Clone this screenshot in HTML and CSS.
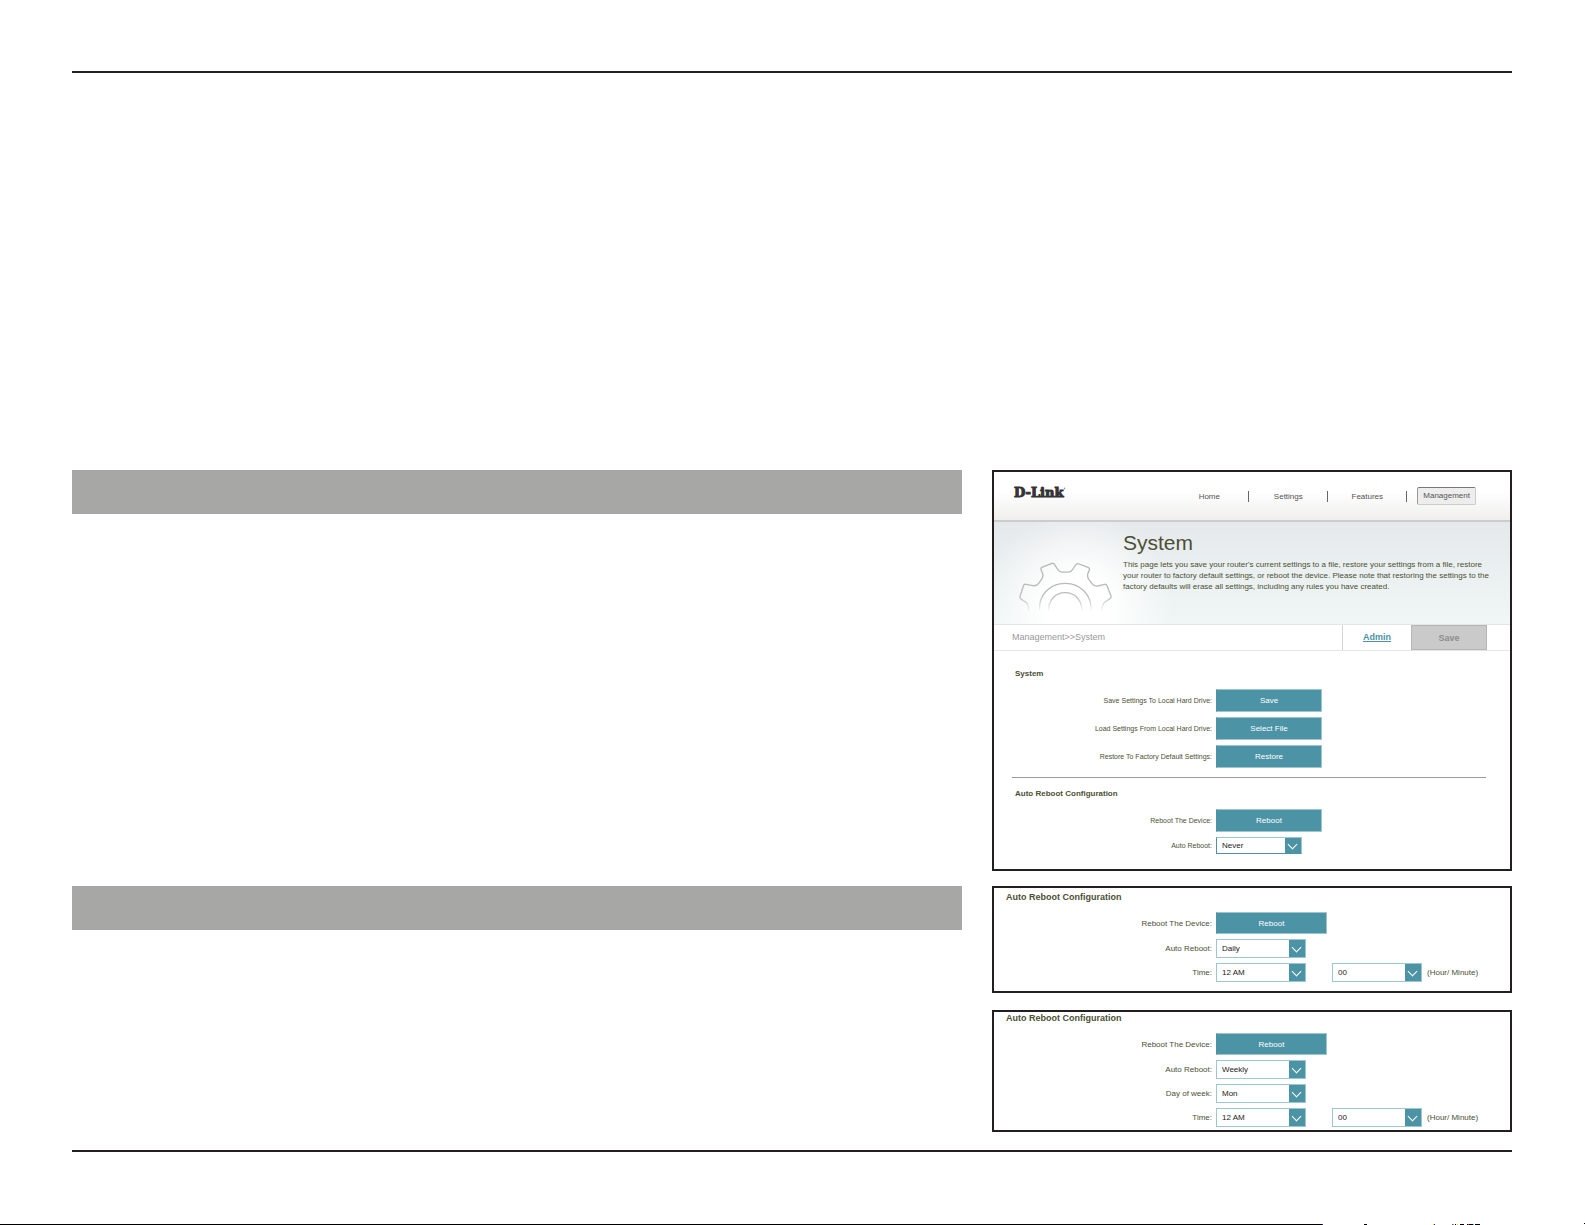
FILE: index.html
```html
<!DOCTYPE html>
<html lang="en">
<head>
    <meta charset="UTF-8">
    <meta name="viewport" content="width=device-width, initial-scale=1.0">
    <title>System</title>
    <link rel="stylesheet" href="styles.css">
</head>
<body>
    <main class="sheet">
        <div class="band"></div>

        <section class="panel">
            <header class="topbar">
                <a href="#" class="logo">D-Link<sup>&#39;</sup></a>
                <nav class="nav">
                    <a href="#">Home</a>
                    <a href="#">Settings</a>
                    <a href="#">Features</a>
                    <a href="#" class="active">Management</a>
                </nav>
            </header>

            <div class="banner">
                <svg class="gear" viewBox="0 0 280 150" fill="none" stroke="url(#fade)" stroke-width="4" aria-hidden="true">
                    <defs>
                        <linearGradient id="fade" gradientUnits="userSpaceOnUse" x1="0" y1="0" x2="0" y2="150">
                            <stop offset="0" stop-color="#b4b6b6"/>
                            <stop offset="0.7" stop-color="#bcbebe"/>
                            <stop offset="1" stop-color="#bcbebe" stop-opacity="0"/>
                        </linearGradient>
                    </defs>
                    <path d="M29 148 C29 136 28 127 22 122 L6 111 Q2 108 3 103 L14 70 Q16 66 21 67 L42 71 Q53 73 60 63 L69 50 Q74 43 71 34 L66 22 Q65 17 70 15 L99 4 Q104 3 107 7 L115 20 Q121 30 131 30 L149 30 Q158 29 163 20 L171 8 Q174 3 179 5 L208 16 Q213 18 212 23 L207 36 Q205 44 210 52 L219 64 Q226 74 237 72 L258 67 Q263 66 265 71 L277 102 Q278 107 274 110 L258 121 Q250 127 250 148"/>
                    <path d="M62 148 C58 100 92 64 139 64 C186 64 220 100 217 148"/>
                    <path d="M90 148 C87 116 109 92 139 92 C169 92 191 116 189 148"/>
                </svg>
                <div class="intro">
                    <h1>System</h1>
                    <p>This page lets you save your router's current settings to a file, restore your settings from a file, restore your router to factory default settings, or reboot the device. Please note that restoring the settings to the factory defaults will erase all settings, including any rules you have created.</p>
                </div>
            </div>

            <div class="crumbs">
                <span class="path">Management&gt;&gt;System</span>
                <a href="#" class="admin">Admin</a>
                <button type="button" class="save">Save</button>
            </div>

            <form class="settings">
                <h2>System</h2>
                <div class="row">
                    <label for="saveSettings">Save Settings To Local Hard Drive:</label>
                    <button type="button" id="saveSettings" class="btn">Save</button>
                </div>
                <div class="row">
                    <label for="loadSettings">Load Settings From Local Hard Drive:</label>
                    <button type="button" id="loadSettings" class="btn">Select File</button>
                </div>
                <div class="row">
                    <label for="restoreSettings">Restore To Factory Default Settings:</label>
                    <button type="button" id="restoreSettings" class="btn">Restore</button>
                </div>
                <hr>
                <h2>Auto Reboot Configuration</h2>
                <div class="row">
                    <label for="rebootNow">Reboot The Device:</label>
                    <button type="button" id="rebootNow" class="btn">Reboot</button>
                </div>
                <div class="row">
                    <label for="autoReboot">Auto Reboot:</label>
                    <span class="select">
                        <select id="autoReboot">
                            <option>Never</option>
                            <option>Daily</option>
                            <option>Weekly</option>
                        </select>
                    </span>
                </div>
            </form>
        </section>

        <div class="band"></div>

        <div class="schedules">
            <form class="panel settings schedule daily">
                <h2>Auto Reboot Configuration</h2>
                <div class="row">
                    <label for="rebootDaily">Reboot The Device:</label>
                    <button type="button" id="rebootDaily" class="btn">Reboot</button>
                </div>
                <div class="row">
                    <label for="autoDaily">Auto Reboot:</label>
                    <span class="select">
                        <select id="autoDaily">
                            <option>Never</option>
                            <option selected>Daily</option>
                            <option>Weekly</option>
                        </select>
                    </span>
                </div>
                <div class="row">
                    <label for="hourDaily">Time:</label>
                    <div class="time">
                        <span class="select">
                            <select id="hourDaily">
                                <option>12 AM</option>
                            </select>
                        </span>
                        <span class="select">
                            <select id="minuteDaily">
                                <option>00</option>
                            </select>
                        </span>
                        <label for="minuteDaily">(Hour/ Minute)</label>
                    </div>
                </div>
            </form>

            <form class="panel settings schedule">
                <h2>Auto Reboot Configuration</h2>
                <div class="row">
                    <label for="rebootWeekly">Reboot The Device:</label>
                    <button type="button" id="rebootWeekly" class="btn">Reboot</button>
                </div>
                <div class="row">
                    <label for="autoWeekly">Auto Reboot:</label>
                    <span class="select">
                        <select id="autoWeekly">
                            <option>Never</option>
                            <option>Daily</option>
                            <option selected>Weekly</option>
                        </select>
                    </span>
                </div>
                <div class="row">
                    <label for="dayWeekly">Day of week:</label>
                    <span class="select">
                        <select id="dayWeekly">
                            <option>Mon</option>
                        </select>
                    </span>
                </div>
                <div class="row">
                    <label for="hourWeekly">Time:</label>
                    <div class="time">
                        <span class="select">
                            <select id="hourWeekly">
                                <option>12 AM</option>
                            </select>
                        </span>
                        <span class="select">
                            <select id="minuteWeekly">
                                <option>00</option>
                            </select>
                        </span>
                        <label for="minuteWeekly">(Hour/ Minute)</label>
                    </div>
                </div>
            </form>
        </div>
    </main>

    <svg class="edge" viewBox="0 0 1585 2" preserveAspectRatio="none" shape-rendering="crispEdges" aria-hidden="true">
        <path d="M0 1h1322v1H0zM1364 1h3v1h-3zM1455 1h1v1h-1zM1460 1h4v1h-4zM1467 1h1v1h-1zM1469 1h4v1h-4zM1475 1h5v1h-5zM1584 0h1v1h-1z"/>
        <path fill="#2a20c0" d="M1322 1h1v1h-1zM1434 1h1v1h-1z"/>
        <path fill="#e8d820" d="M1433 1h1v1h-1zM1457 1h1v1h-1z"/>
        <path fill="#d03040" d="M1452 1h1v1h-1zM1468 1h1v1h-1z"/>
        <path fill="#30c8d0" d="M1453 1h1v1h-1zM1473 1h1v1h-1z"/>
    </svg>
</body>
</html>
```
FILE: styles.css
```css
* {
    box-sizing: border-box;
    margin: 0;
    padding: 0;
}
body {
    display: flex;
    flex-direction: column;
    min-height: 100vh;
    padding-top: 71px;
    background-color: #fff;
    font-family: "Liberation Sans", Arial, sans-serif;
    font-size: 8px;
    color: #4b4f35;
}
a {
    color: inherit;
    text-decoration: none;
}
button,
select {
    font-family: inherit;
    font-size: inherit;
    border-radius: 0;
}
.sheet {
    display: grid;
    grid-template-columns: 890fr 520fr;
    gap: 15px 30px;
    margin: 0 73px 0 72px;
    padding: 397px 0 18px;
    border-top: 2px solid #231f20;
    border-bottom: 2px solid #231f20;
}
.band {
    height: 44px;
    background-color: #a7a7a5;
}
.panel {
    border: 2px solid #231f20;
}
.topbar {
    display: flex;
    justify-content: space-between;
    align-items: center;
    height: 50px;
    padding: 0 34px 0 20px;
    background: linear-gradient(#fff 40%, #f0efee);
    border-bottom: 2px solid #ccc;
}
.logo {
    align-self: flex-start;
    padding-top: 13px;
    font-family: "DejaVu Serif", serif;
    font-size: 13px;
    line-height: 16px;
    font-weight: bold;
    color: #333;
    -webkit-text-stroke: 1px #333;
}
.logo sup {
    font-size: 6px;
    line-height: 1px;
    -webkit-text-stroke: 0;
}
.nav {
    display: flex;
    align-items: center;
    color: #555;
}
.nav a {
    width: 79px;
    line-height: 11px;
    text-align: center;
    border-right: 1px solid #666;
}
.nav a.active {
    width: auto;
    margin-left: 10px;
    padding: 0 5px;
    line-height: 16px;
    background-color: #ededed;
    border: 1px solid #ccc;
    border-top-color: #777;
    border-left-color: #999;
    border-radius: 2px;
}
.banner {
    display: flex;
    gap: 11px;
    height: 102px;
    padding: 9px 16px 0 25px;
    background: radial-gradient(circle at 84px 84px, #fff 30px, rgba(255, 255, 255, 0) 95px), linear-gradient(#e5e9eb, #f0f6f6);
}
.gear {
    flex: none;
    width: 93px;
    height: 50px;
    margin-top: 31px;
}
.intro h1 {
    font-size: 21px;
    line-height: 24px;
    font-weight: normal;
}
.intro p {
    margin-top: 4px;
    line-height: 11px;
}
.crumbs {
    display: flex;
    align-items: stretch;
    height: 27px;
    padding: 0 23px 0 18px;
    border-top: 1px solid #e4e6e6;
    border-bottom: 1px solid #e6e6e6;
    font-size: 9px;
    line-height: 25px;
}
.path {
    flex: 1;
    color: #999;
}
.admin {
    width: 69px;
    text-align: center;
    text-decoration: underline;
    font-weight: bold;
    color: #4c93a6;
    border-left: 1px solid #d4d4d4;
}
.save {
    width: 76px;
    font-weight: bold;
    color: #8d8d8d;
    background-color: #cacaca;
    border: 1px solid #b5b5b5;
}
.settings {
    display: flex;
    flex-direction: column;
    gap: 5px;
    padding: 17px 0 15px;
    font-size: 7px;
}
.settings h2 {
    margin: 0 21px 4px;
    font-size: 8px;
    line-height: 12px;
}
.settings hr {
    margin: 4px 24px 5px 18px;
    border: 0;
    border-top: 1px solid #9a9c9c;
}
.row {
    display: grid;
    grid-template-columns: 218fr 294fr;
    align-items: center;
    gap: 4px;
}
.row > label {
    text-align: right;
}
.btn {
    width: 106px;
    height: 23px;
    font-size: 8px;
    color: #fff;
    background-color: #4c93a6;
    border: 1px solid #9cc6d0;
    border-left-color: #4c93a6;
}
.select {
    position: relative;
    display: block;
    width: 86px;
}
.select select {
    display: block;
    appearance: none;
    width: 100%;
    height: 17px;
    padding: 0 20px 0 5px;
    font-size: 8px;
    color: #222;
    background: linear-gradient(#4c93a6, #4c93a6) right / 16px 100% no-repeat #fff;
    border: 1px solid #4c93a6;
    border-top-color: #9cc6d0;
    border-right-color: #9cc6d0;
}
/* chevron */
.select::after {
    content: "";
    position: absolute;
    top: 4px;
    right: 6px;
    width: 6px;
    height: 6px;
    border: solid #fff;
    border-width: 0 1px 1px 0;
    transform: rotate(45deg);
    pointer-events: none;
}
.schedules {
    display: flex;
    flex-direction: column;
    gap: 17px;
}
.schedule {
    padding: 0 0 3px;
    font-size: 8px;
}
.daily {
    padding: 3px 0 9px;
}
.schedule h2 {
    margin: 0 12px 4px;
    font-size: 9px;
}
.schedule .btn {
    width: 111px;
    height: 22px;
}
.schedule .select {
    width: 90px;
}
.schedule select {
    height: 19px;
    border-color: #9cc6d0;
}
.schedule .select::after {
    top: 5px;
}
.time {
    display: flex;
    align-items: center;
}
.time .select + .select {
    margin: 0 5px 0 26px;
}
/* scan line along the foot of the page */
.edge {
    display: block;
    width: 100%;
    height: 2px;
    margin-top: auto;
}
```
